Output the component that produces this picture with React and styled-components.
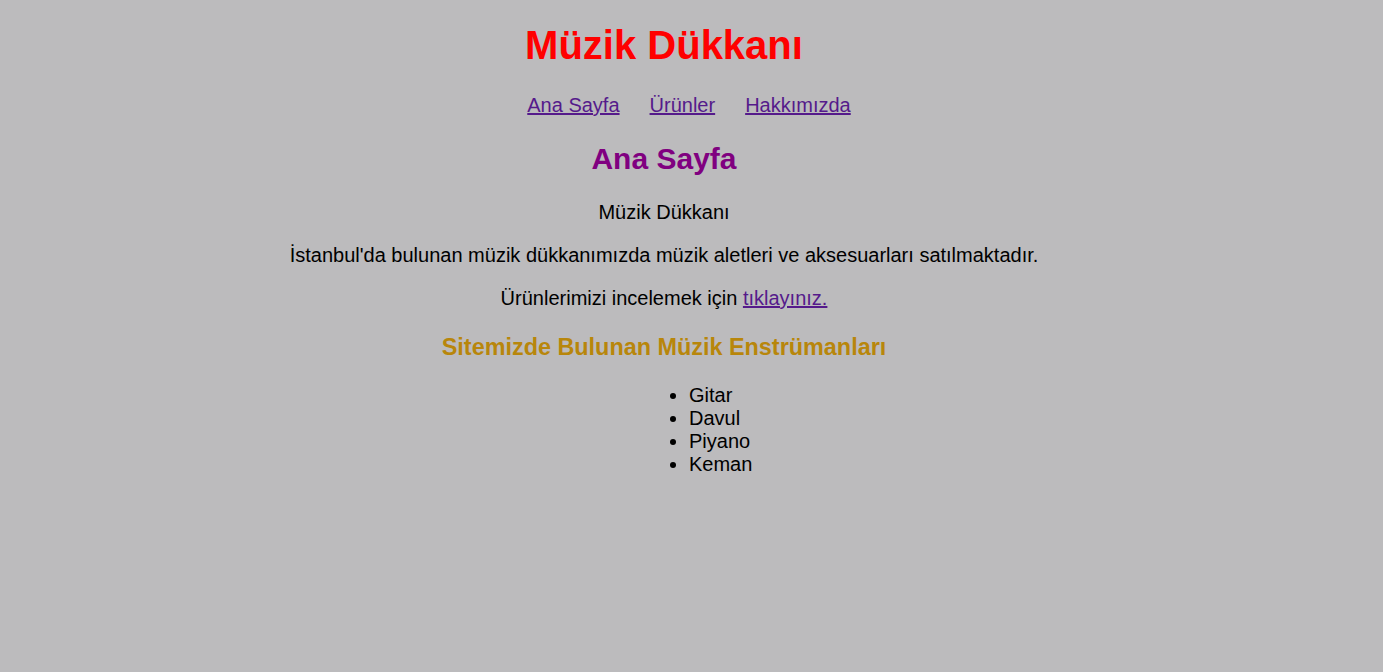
import React from 'react'
import styled, { createGlobalStyle } from 'styled-components'

const GlobalStyle = createGlobalStyle`
    html, body {
        margin: 0;
        padding: 0;
        background: #bcbbbd;
    }
    body {
        font-family: "Liberation Sans", Arial, sans-serif;
        font-size: 20px;
        color: #000;
    }
`;

const links = ['Ana Sayfa', 'Ürünler', 'Hakkımızda'];
const instruments = ['Gitar', 'Davul', 'Piyano', 'Keman'];

const App = () => {
    return (
        <Page>
            <GlobalStyle />
            <Title>Müzik Dükkanı</Title>

            <Nav>
                {links.map((l, i) => {
                    return <NavLink key={`nav${i}`} href="#">{l}</NavLink>
                })}
            </Nav>

            <PageHeading>Ana Sayfa</PageHeading>

            <Text>Müzik Dükkanı</Text>
            <Text>İstanbul'da bulunan müzik dükkanımızda müzik aletleri ve aksesuarları satılmaktadır.</Text>
            <Text>
                Ürünlerimizi incelemek için <InlineLink href="#">tıklayınız.</InlineLink>
            </Text>

            <SubHeading>Sitemizde Bulunan Müzik Enstrümanları</SubHeading>
            <List>
                {instruments.map((item, i) => {
                    return <li key={`ins${i}`}>{item}</li>
                })}
            </List>
        </Page>
    )
}

export default App

const Page = styled.main`
    width: 1312px;
    margin: 0 0 0 8px;
    padding-top: 1px;
    text-align: center;
`;

const Title = styled.h1`
    color: #ff0000;
    font-size: 40px;
    font-weight: bold;
    margin: 22px 0 26px;
`;

const Nav = styled.nav`
    display: flex;
    justify-content: center;
    gap: 30px;
    padding-left: 50px;
    margin: 20px 0;
    line-height: normal;
`;

const NavLink = styled.a`
    color: #551a8b;
    text-decoration: underline;
`;

const InlineLink = styled.a`
    color: #551a8b;
    text-decoration: underline;
`;

const PageHeading = styled.h2`
    color: #800080;
    font-size: 30px;
    font-weight: bold;
    margin: 25px 0;
`;

const Text = styled.p`
    margin: 20px 0;
`;

const SubHeading = styled.h3`
    color: #b8860b;
    font-size: 23.4px;
    font-weight: bold;
    margin: 24.4px 0 22.4px;
`;

const List = styled.ul`
    box-sizing: border-box;
    width: 150px;
    margin: 20px auto;
    padding-left: 100px;
    text-align: left;
    list-style: disc outside;
`;
